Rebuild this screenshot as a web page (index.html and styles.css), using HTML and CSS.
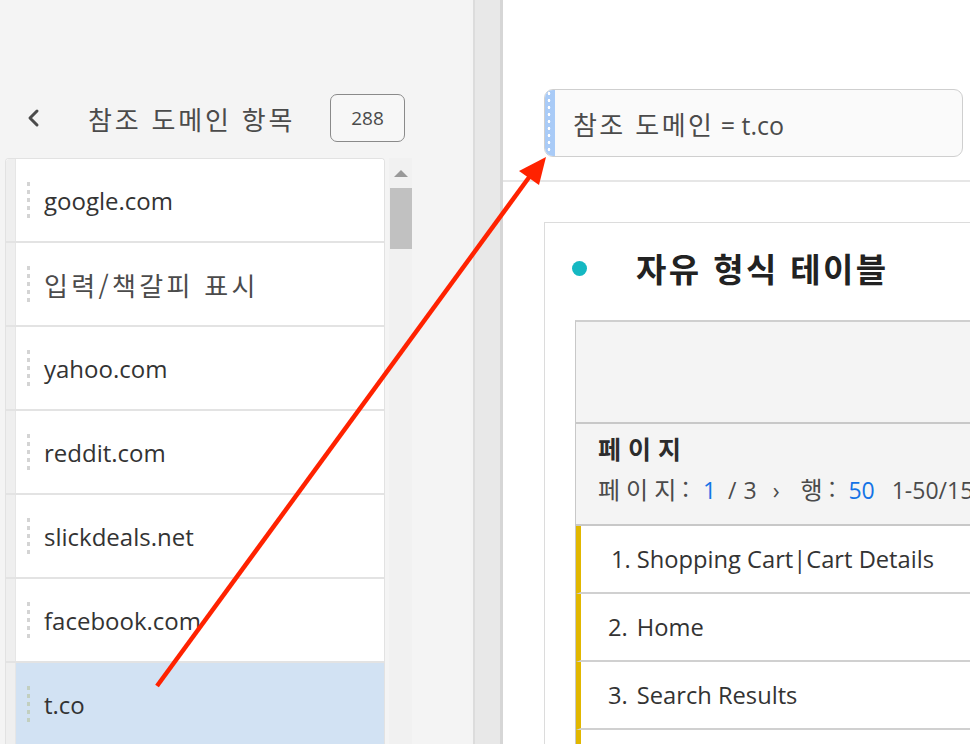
FILE: index.html
```html
<!DOCTYPE html>
<html lang="ko">
<head>
<meta charset="utf-8">
<title>참조 도메인 항목</title>
<link rel="stylesheet" href="styles.css">
</head>
<body>
<div class="app">
  <aside class="left">
    <div class="left-head">
      <svg class="back" width="16" height="20" viewBox="0 0 16 20"><path d="M11 3 L4 10 L11 17" fill="none" stroke="#4b4b4b" stroke-width="3" stroke-linecap="round" stroke-linejoin="round"/></svg>
      <span class="left-title">참조 도메인 항목</span>
      <span class="count">288</span>
    </div>
    <div class="list-wrap">
      <ul class="list">
        <li class="item"><span class="gcol"></span><span class="grip"></span><span class="label">google.com</span></li>
        <li class="item"><span class="gcol"></span><span class="grip"></span><span class="label ko">입력/책갈피 표시</span></li>
        <li class="item"><span class="gcol"></span><span class="grip"></span><span class="label">yahoo.com</span></li>
        <li class="item"><span class="gcol"></span><span class="grip"></span><span class="label">reddit.com</span></li>
        <li class="item"><span class="gcol"></span><span class="grip"></span><span class="label">slickdeals.net</span></li>
        <li class="item"><span class="gcol"></span><span class="grip"></span><span class="label">facebook.com</span></li>
        <li class="item selected"><span class="gcol"></span><span class="grip"></span><span class="label">t.co</span></li>
      </ul>
      <div class="scrollbar">
        <span class="up"></span>
        <span class="thumb"></span>
      </div>
    </div>
  </aside>
  <div class="divider"></div>
  <main class="right">
    <div class="filter">
      <span class="fgrip"></span>
      <span class="ftext"><span class="fko">참조 도메인</span> = t.co</span>
    </div>
    <div class="rule"></div>
    <section class="card">
      <div class="card-head">
        <span class="dot"></span>
        <h2 class="card-title">자유 형식 테이블</h2>
      </div>
      <div class="table">
        <div class="thead-top"></div>
        <div class="thead-dim">
          <div class="dim-name">페이지</div>
          <div class="pager">
            <span class="ko">페이지:</span>
            <span class="blue p1">1</span>
            <span class="p2">/</span>
            <span class="p3">3</span>
            <span class="chev">›</span>
            <span class="ko p4">행:</span>
            <span class="blue p5">50</span>
            <span class="p6">1-50/150</span>
          </div>
        </div>
        <div class="row"><span class="num">1.</span>Shopping Cart|Cart Details</div>
        <div class="row"><span class="num n2">2.</span>Home</div>
        <div class="row"><span class="num n2">3.</span>Search Results</div>
        <div class="row"></div>
      </div>
    </section>
  </main>
  <svg class="annot" width="970" height="744" viewBox="0 0 970 744">
    <line x1="157" y1="686" x2="530" y2="176" stroke="#ff2200" stroke-width="4.5" stroke-linecap="butt"/>
    <polygon points="546,157 519,171 539,185" fill="#ff2200"/>
  </svg>
</div>
</body>
</html>
```
FILE: styles.css
```css
html, body {
  margin: 0;
  padding: 0;
}
body {
  width: 970px;
  height: 744px;
  overflow: hidden;
  background: #fff;
  font-family: "Open Sans", "Noto Sans CJK KR", sans-serif;
  color: #333;
}
.app {
  position: relative;
  display: flex;
  width: 970px;
  height: 744px;
  overflow: hidden;
}
.left {
  width: 473px;
  flex: none;
  background: #f4f4f4;
  display: flex;
  flex-direction: column;
}
.left-head {
  display: flex;
  align-items: center;
  height: 48px;
  margin-top: 94px;
  padding-left: 26px;
  flex: none;
}
.back {
  flex: none;
}
.left-title {
  margin-left: 46px;
  font-family: "Noto Sans CJK KR", sans-serif;
  font-size: 26px;
  letter-spacing: 2.8px;
  color: #4b4b4b;
  width: 242px;
  white-space: nowrap;
}
.count {
  box-sizing: border-box;
  width: 75px;
  height: 48px;
  border: 1px solid #8a8a8a;
  border-radius: 7px;
  display: flex;
  align-items: center;
  justify-content: center;
  font-size: 19px;
  color: #4b4b4b;
  background: #f7f7f7;
}
.list-wrap {
  display: flex;
  margin-top: 16px;
  flex: 1;
}
.list {
  list-style: none;
  margin: 0 0 0 5px;
  padding: 0;
  width: 378px;
  border: 1px solid #e2e2e2;
  border-bottom: 0;
  border-radius: 4px 4px 0 0;
  background: #fff;
  overflow: hidden;
}
.item {
  display: flex;
  align-items: center;
  height: 82px;
  border-bottom: 2px solid #e3e3e3;
  background: #fff;
}
.gcol {
  align-self: stretch;
  width: 9px;
  flex: none;
  background: #efefef;
  border-right: 1px solid #e6e6e6;
}
.grip {
  width: 3px;
  height: 36px;
  margin-left: 11px;
  background: linear-gradient(#d4d4d4 45%, transparent 45%);
  background-size: 3px 8px;
  flex: none;
}
.label {
  margin-left: 14px;
  font-size: 24px;
  color: #333;
  white-space: nowrap;
}
.label.ko {
  font-family: "Noto Sans CJK KR", sans-serif;
  color: #4b4b4b;
  letter-spacing: 3.3px;
  font-size: 26px;
}
.item.selected {
  background: #d2e2f3;
}
.item.selected .grip {
  background: linear-gradient(#c2cfbf 45%, transparent 45%);
  background-size: 3px 8px;
}
.scrollbar {
  width: 23px;
  margin-left: 4px;
  background: #f1f1f1;
  display: flex;
  flex-direction: column;
  align-items: center;
}
.up {
  margin-top: 12px;
  width: 0;
  height: 0;
  border-left: 7px solid transparent;
  border-right: 7px solid transparent;
  border-bottom: 7px solid #999;
}
.thumb {
  margin-top: 11px;
  width: 22px;
  height: 61px;
  background: #c1c1c1;
}
.divider {
  width: 30px;
  flex: none;
  box-sizing: border-box;
  background: #e8e8e8;
  border-left: 2px solid #dcdcdc;
  border-right: 3px solid #d6d6d6;
}
.right {
  flex: 1;
  display: flex;
  flex-direction: column;
  min-width: 0;
}
.filter {
  flex: none;
  margin: 89px 7px 0 41px;
  height: 66px;
  border: 1px solid #cfcfcf;
  border-radius: 9px;
  background: #fafafa;
  display: flex;
  align-items: center;
  overflow: hidden;
}
.fgrip {
  align-self: stretch;
  width: 10px;
  flex: none;
  background-color: #a9cbf7;
  background-image: radial-gradient(circle, #fff 1.2px, transparent 1.6px);
  background-size: 10px 7px;
  background-position: -1px 14px;
  background-repeat: repeat-y;
}
.ftext {
  margin-left: 18px;
  font-size: 25px;
  color: #4b4b4b;
  white-space: nowrap;
}
.fko {
  font-family: "Noto Sans CJK KR", sans-serif;
  font-size: 26px;
  letter-spacing: 2.4px;
}
.rule {
  flex: none;
  margin-top: 23px;
  height: 2px;
  background: #e6e6e6;
}
.card {
  margin: 40px 0 0 41px;
  border: 1px solid #dcdcdc;
  border-right: 0;
  border-bottom: 0;
  flex: 1;
  padding-left: 30px;
}
.card-head {
  display: flex;
  align-items: center;
  height: 90px;
  margin-left: -30px;
}
.dot {
  width: 15px;
  height: 15px;
  border-radius: 50%;
  background: #15b8c2;
  margin-left: 27px;
  flex: none;
}
.card-title {
  margin: 0 0 0 49px;
  font-family: "Noto Sans CJK KR", sans-serif;
  font-size: 33px;
  font-weight: 700;
  color: #222;
  letter-spacing: 2.4px;
  white-space: nowrap;
}
.table {
  margin-top: 7px;
  border-left: 1px solid #c8c8c8;
  border-top: 2px solid #cfcfcf;
}
.thead-top {
  height: 100px;
  background: #f4f4f4;
  border-bottom: 2px solid #c8c8c8;
}
.thead-dim {
  background: #f4f4f4;
  border-bottom: 2px solid #c8c8c8;
  padding-left: 22px;
  box-sizing: border-box;
  height: 102px;
  overflow: hidden;
}
.dim-name {
  padding-top: 6px;
  font-family: "Noto Sans CJK KR", sans-serif;
  font-size: 25px;
  font-weight: 700;
  color: #2c2c2c;
  letter-spacing: 7px;
  line-height: 36px;
}
.pager {
  margin-top: 6px;
  display: flex;
  align-items: baseline;
  font-size: 23px;
  color: #4b4b4b;
  white-space: nowrap;
  line-height: 34px;
}
.pager .ko {
  font-family: "Noto Sans CJK KR", sans-serif;
  font-size: 24px;
  letter-spacing: 6px;
}
.pager .blue {
  color: #1473e6;
}
.pager .p1 { margin-left: 8px; }
.pager .p2 { margin-left: 12px; }
.pager .p3 { margin-left: 7px; }
.pager .chev { margin-left: 16px; }
.pager .p4 { margin-left: 21px; }
.pager .p5 { margin-left: 7px; }
.pager .p6 { margin-left: 17px; }
.row {
  height: 66px;
  border-bottom: 2px solid #d0d0d0;
  border-left: 5px solid #e1b700;
  display: flex;
  align-items: center;
  padding-left: 30px;
  font-size: 23.7px;
  color: #333;
  white-space: nowrap;
}
.row .num {
  margin-right: 6px;
}
.row .num.n2 {
  margin-left: -3px;
  margin-right: 9px;
}
.annot {
  position: absolute;
  left: 0;
  top: 0;
  pointer-events: none;
}
```
